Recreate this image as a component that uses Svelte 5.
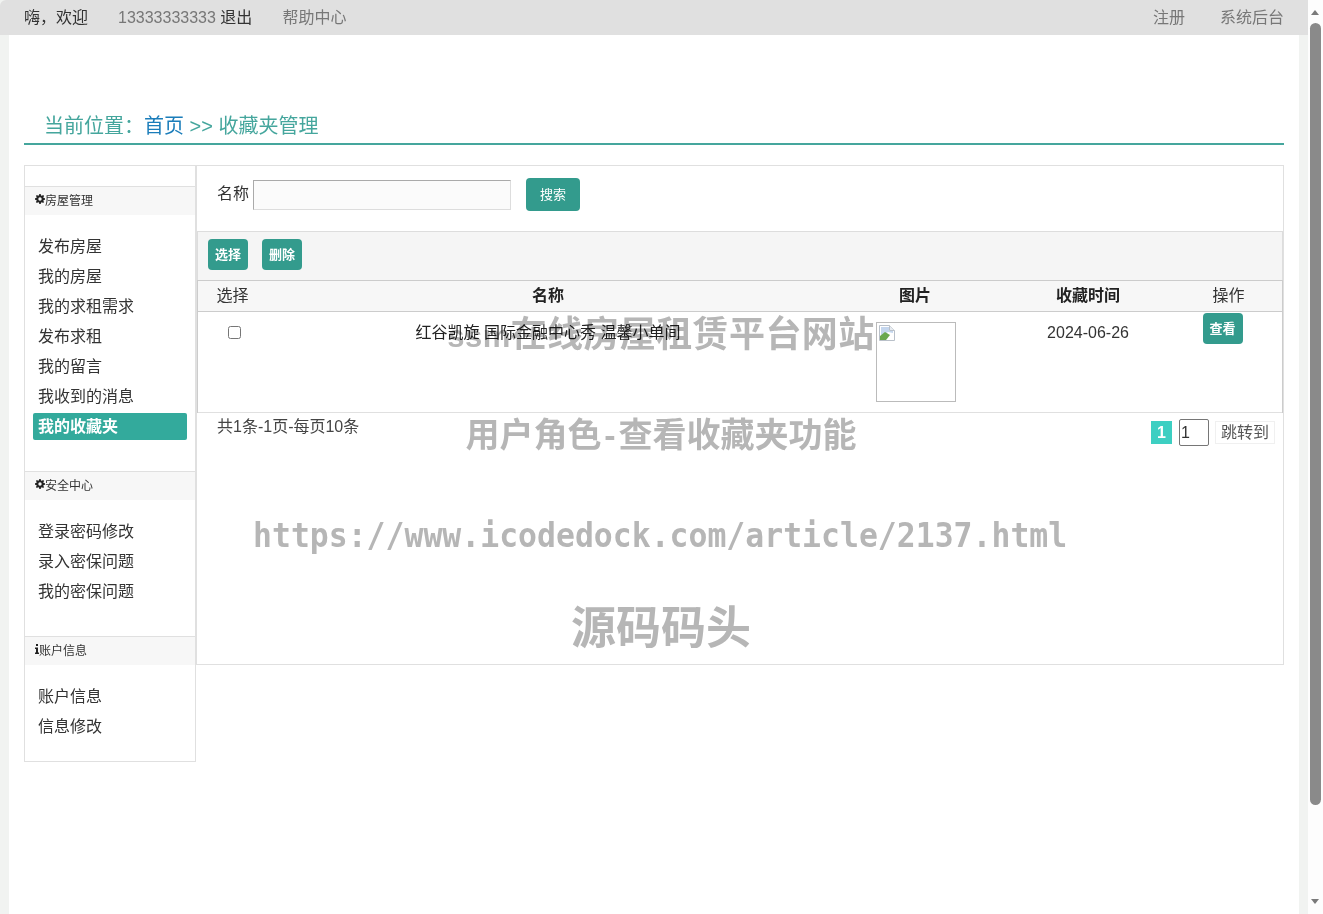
<script>
  const groups = [
    { title: '房屋管理', icon: 'cog', items: ['发布房屋', '我的房屋', '我的求租需求', '发布求租', '我的留言', '我收到的消息', '我的收藏夹'] },
    { title: '安全中心', icon: 'cog', items: ['登录密码修改', '录入密保问题', '我的密保问题'] },
    { title: '账户信息', icon: 'info', items: ['账户信息', '信息修改'] }
  ];
  const active = '我的收藏夹';
  const cog = 'M4.3 0h1.4l.3 1.4.9.4L8.1 1l1 1-.8 1.2.4.9 1.3.2v1.4l-1.3.3-.4.9.8 1.2-1 1-1.2-.8-.9.4L5.7 10H4.3L4 8.6l-.9-.4L1.9 9l-1-1 .8-1.2-.4-.9L0 5.7V4.3l1.3-.3.4-.9L.9 1.9l1-1 1.2.8.9-.4zM5 3.3a1.7 1.7 0 1 0 0 3.4 1.7 1.7 0 0 0 0-3.4z';
</script>

<div class="shell">
  <div class="page">
    <header class="topbar">
      <div class="side">
        <span class="dark">嗨，欢迎</span>
        <span class="user"><span class="grey">13333333333</span> <span class="dark">退出</span></span>
        <span class="grey">帮助中心</span>
      </div>
      <div class="side right">
        <span class="grey">注册</span>
        <span class="grey">系统后台</span>
      </div>
    </header>

    <main class="content">
      <div class="crumb">当前位置：<a href="#top">首页</a> &gt;&gt; 收藏夹管理</div>

      <div class="layout">
        <nav class="sidebar">
          {#each groups as g}
            <section class="group">
              <h3>
                {#if g.icon === 'cog'}
                  <svg width="10" height="10" viewBox="0 0 10 10"><path fill="#222" fill-rule="evenodd" d={cog} /></svg>
                {:else}
                  <svg class="info" width="4" height="10" viewBox="0 0 4 10"><path fill="#222" d="M1 0h2v2H1zM0 3.5h3V8.6h1V10H0V8.6h1V5H0z" /></svg>
                {/if}
                {g.title}
              </h3>
              <ul>
                {#each g.items as item}
                  <li class:on={item === active}><span>{item}</span></li>
                {/each}
              </ul>
            </section>
          {/each}
        </nav>

        <div class="panel">
          <div class="search">
            <label for="q">名称</label>
            <input id="q" type="text" />
            <button class="btn search-btn">搜索</button>
          </div>

          <div class="toolbar">
            <button class="btn small">选择</button>
            <button class="btn small">删除</button>
          </div>

          <table>
            <colgroup>
              <col class="c1" /><col class="c2" /><col class="c3" /><col class="c4" /><col class="c5" />
            </colgroup>
            <thead>
              <tr>
                <th class="plain">选择</th>
                <th>名称</th>
                <th>图片</th>
                <th>收藏时间</th>
                <th class="plain">操作</th>
              </tr>
            </thead>
            <tbody>
              <tr>
                <td><input class="check" type="checkbox" /></td>
                <td class="name">红谷凯旋 国际金融中心秀 温馨小单间</td>
                <td>
                  <div class="pic">
                    <svg width="16" height="16" viewBox="0 0 16 16">
                      <path d="M.5.5h10l5 5v10H.5z" fill="#fff" stroke="#b9c0c9" />
                      <path d="M10.5.5v5h5" fill="#e8ecf0" stroke="#b9c0c9" />
                      <path d="M2 2h8v4h4v2L9 7 2 11z" fill="#c4d6ee" />
                      <path d="M1 15v-4l5-4 5 3-4 5z" fill="#6aa84f" />
                    </svg>
                  </div>
                </td>
                <td class="date">2024-06-26</td>
                <td class="act"><button class="btn small">查看</button></td>
              </tr>
            </tbody>
          </table>

          <div class="pager">
            <span class="count">共1条-1页-每页10条</span>
            <div class="pages">
              <span class="cur">1</span>
              <input class="goto" type="text" value="1" />
              <span class="jump">跳转到</span>
            </div>
          </div>
        </div>
      </div>
    </main>

    <div class="wm w1"><span class="latin">ssm</span>在线房屋租赁平台网站</div>
    <div class="wm w2">用户角色<span class="dash">-</span>查看收藏夹功能</div>
    <div class="wm w3"><span>https://www.icodedock.com/article/2137.html</span></div>
    <div class="wm w4">源码码头</div>
  </div>

  <aside class="scrollbar" aria-hidden="true">
    <i class="arrow up"></i>
    <b class="thumb"></b>
    <i class="arrow down"></i>
  </aside>
</div>

<style>
  :global(body) {
    margin: 0;
    background: #f1f3f1;
    font-family: "Liberation Sans", "Noto Sans CJK SC", sans-serif;
    color: #333;
    overflow: hidden;
  }
  .shell { display: flex; height: 914px; overflow: hidden; }
  .page { position: relative; width: 1308px; flex: none; background: #f1f3f1; }

  .topbar {
    display: flex;
    justify-content: space-between;
    align-items: center;
    height: 35px;
    box-sizing: border-box;
    padding: 0 24px 4px 24px;
    background: #e0e0e0;
    border-radius: 6px 0 0 0;
    font-size: 16px;
  }
  .side { display: flex; gap: 30px; }
  .side.right { gap: 35px; }
  .dark { color: #333; }
  .grey { color: #777; }

  .content {
    height: 879px;
    margin: 0 9px;
    padding: 0 15px;
    background: #fff;
    box-sizing: border-box;
  }
  .crumb {
    height: 110px;
    box-sizing: border-box;
    padding: 77px 0 0 20px;
    line-height: 28px;
    font-size: 20px;
    color: #45a69d;
    border-bottom: 2px solid #45a69d;
  }
  .crumb a { color: #1b7dba; text-decoration: none; }

  .layout { display: flex; align-items: flex-start; margin-top: 20px; }

  .sidebar {
    width: 172px;
    box-sizing: border-box;
    flex: none;
    padding: 20px 0 20px;
    border: 1px solid #e0e0e0;
  }
  .group + .group { margin-top: 30px; }
  .group h3 {
    display: flex;
    align-items: center;
    height: 29px;
    box-sizing: border-box;
    margin: 0;
    padding: 0 0 4px 10px;
    font-size: 12px;
    font-weight: 400;
    color: #333;
    background: #f7f7f7;
    border-top: 1px solid #e0e0e0;
  }
  .group h3 svg { flex: none; }
  .group ul { list-style: none; margin: 0; padding: 16px 0 0; }
  .group li {
    height: 30px;
    line-height: 31px;
    padding-left: 13px;
    font-size: 16px;
    color: #333;
  }
  .group li.on { padding-left: 8px; }
  .group li.on span {
    display: block;
    width: 154px;
    height: 27px;
    line-height: 27px;
    padding-left: 5px;
    box-sizing: border-box;
    background: #33aa9c;
    border-radius: 2px;
    color: #fff;
    font-weight: 700;
    position: relative;
    top: 2px;
  }

  .panel {
    flex: 1;
    height: 500px;
    box-sizing: border-box;
    border: 1px solid #e0e0e0;
    background: #fff;
  }

  .search {
    display: flex;
    align-items: center;
    height: 65px;
    padding: 0 0 7px 20px;
    box-sizing: border-box;
    font-size: 16px;
    color: #333;
  }
  .search label { margin-right: 4px; position: relative; top: -3px; }
  .search input {
    width: 258px;
    height: 30px;
    box-sizing: border-box;
    margin: 0;
    padding: 0 4px;
    background: #fbfbfb;
    border: 1px solid #ddd;
    border-top-color: #aaa;
    border-left-color: #aaa;
  }
  .btn {
    margin: 0;
    padding: 0 0 2px;
    border: 0;
    border-radius: 4px;
    background: #339b8d;
    color: #fff;
    font-family: inherit;
    font-size: 13px;
    cursor: pointer;
  }
  .search-btn { width: 54px; height: 33px; margin: 0 0 2px 15px; }
  .small { width: 40px; height: 31px; font-weight: 700; }

  .toolbar {
    display: flex;
    gap: 14px;
    height: 49px;
    box-sizing: border-box;
    padding: 7px 0 0 10px;
    background: #f5f5f5;
    border-top: 1px solid #ddd;
    border-left: 1px solid #ddd;
    border-right: 1px solid #ddd;
  }

  table {
    width: 100%;
    table-layout: fixed;
    border-collapse: separate;
    border-spacing: 0;
    border: 1px solid #ccc;
    border-bottom: 0;
    font-size: 16px;
    box-sizing: border-box;
  }
  .c1 { width: 69px; }
  .c2 { width: 562px; }
  .c3 { width: 172px; }
  .c4 { width: 174px; }
  .c5 { width: 107px; }
  th {
    height: 30px;
    box-sizing: content-box;
    padding: 0;
    background: #f7f7f7;
    border-bottom: 1px solid #ccc;
    color: #222;
    font-weight: 700;
    line-height: 30px;
    vertical-align: top;
  }
  th.plain { font-weight: 400; color: #333; }
  td {
    height: 101px;
    padding: 10px 0 0;
    box-sizing: border-box;
    vertical-align: top;
    text-align: center;
    line-height: 20px;
    color: #222;
    border-bottom: 1px solid #e0e0e0;
  }
  td.name { color: #222; padding-top: 11px; }
  td.date { color: #333; padding-top: 11px; }
  td.act { padding-top: 1px; padding-right: 12px; }
  .check { margin: 4px 0 0 4px; width: 13px; height: 13px; }
  .pic {
    width: 80px;
    height: 80px;
    box-sizing: border-box;
    margin: 0 0 0 47px;
    border: 1px solid #bbb;
    padding: 2px;
    text-align: left;
  }
  .pic svg { display: block; }

  .pager {
    display: flex;
    justify-content: space-between;
    align-items: flex-start;
    padding: 4px 8px 0 20px;
    font-size: 16px;
    color: #444;
  }
  .count { line-height: 20px; }
  .pages { display: flex; align-items: flex-start; padding-top: 2px; }
  .cur {
    width: 21px;
    height: 23px;
    margin-top: 2px;
    line-height: 23px;
    text-align: center;
    background: #3dcfc2;
    color: #fff;
    font-weight: 700;
  }
  .goto {
    width: 30px;
    height: 27px;
    box-sizing: border-box;
    margin: 0 6px 0 7px;
    padding: 0 1px;
    border: 1px solid #767676;
    border-radius: 2px;
    font-family: inherit;
    font-size: 16px;
    color: #333;
  }
  .jump {
    width: 60px;
    height: 23px;
    box-sizing: border-box;
    margin-top: 2px;
    line-height: 21px;
    text-align: center;
    border: 1px solid #f0f0f0;
    color: #555;
  }

  .wm {
    position: absolute;
    left: 0;
    width: 1322px;
    text-align: center;
    white-space: nowrap;
    color: #b6b6b6;
    font-weight: 700;
    mix-blend-mode: multiply;
    pointer-events: none;
  }
  .w1 { top: 313px; font-size: 36px; line-height: 44px; letter-spacing: 0.4px; }
  .latin { font-size: 31px; }
  .w2 { top: 413px; font-size: 34px; line-height: 44px; }
  .dash { display: inline-block; width: 17px; text-align: center; }
  .w3 { top: 513px; font-size: 34px; line-height: 44px; font-family: "DejaVu Sans Mono", monospace; }
  .w3 span { display: inline-block; transform: scaleX(0.925); margin-left: -2px; }
  .w4 { top: 603px; font-size: 45px; line-height: 52px; }

  .scrollbar {
    position: relative;
    width: 15px;
    flex: none;
    background: #fdfdfd;
  }
  .thumb {
    position: absolute;
    left: 2px;
    top: 23px;
    width: 11px;
    height: 782px;
    background: #8a8a8a;
    border-radius: 6px;
  }
  .arrow {
    position: absolute;
    left: 3px;
    width: 0;
    height: 0;
    border-left: 4.5px solid transparent;
    border-right: 4.5px solid transparent;
  }
  .arrow.up { top: 10px; border-bottom: 5px solid #7a7a7a; }
  .arrow.down { top: 899px; border-top: 5px solid #7a7a7a; }
</style>
